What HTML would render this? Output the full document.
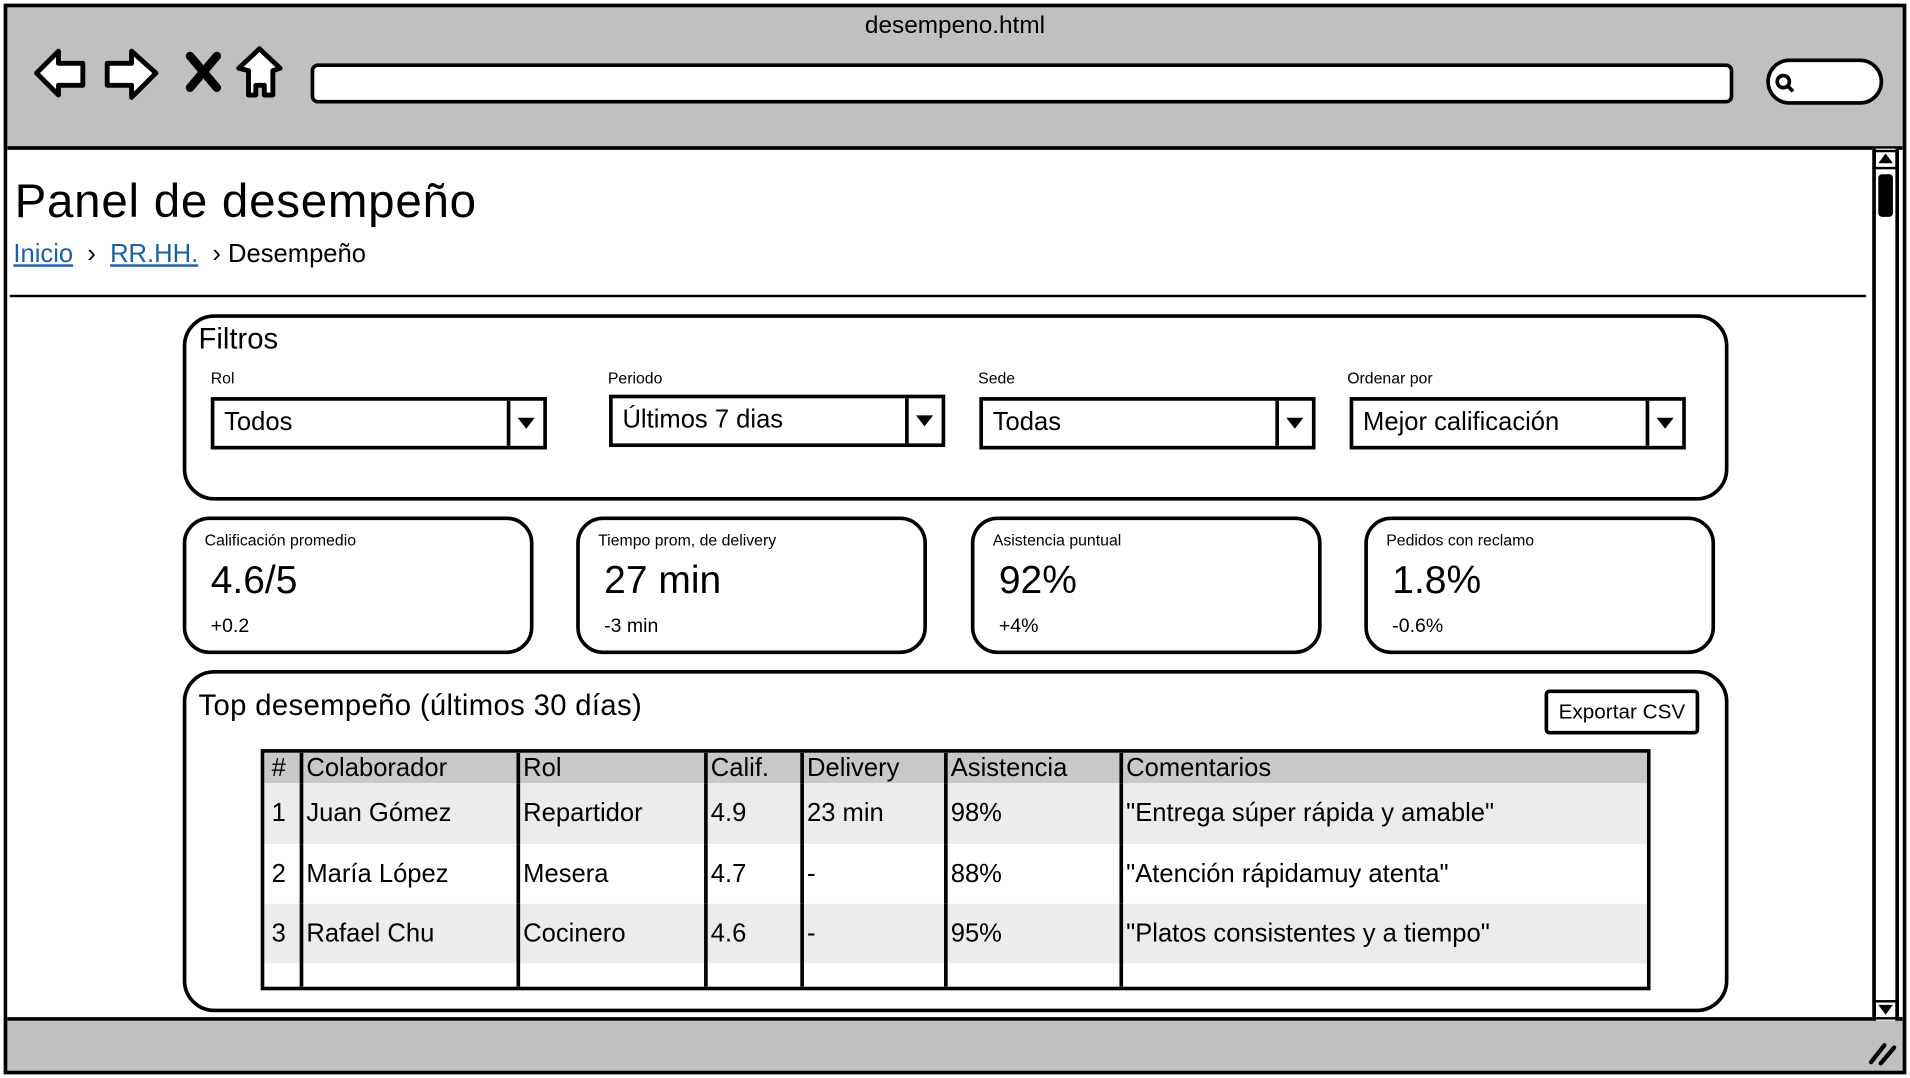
<!DOCTYPE html>
<html><head><meta charset="utf-8"><style>
html,body{margin:0;padding:0;width:1910px;height:1078px;overflow:hidden;background:#fff}
#w{position:absolute;left:0;top:0;width:1568px;height:885px;transform:scale(1.2181,1.2181);transform-origin:0 0;font-family:"Liberation Sans",sans-serif;color:#000}
.a{position:absolute}
.box{position:absolute;border:3px solid #000;box-sizing:border-box;background:#fff}
.t{position:absolute;white-space:nowrap}
.sel{position:absolute;border:3px solid #000;box-sizing:border-box;height:43px;background:#fff}
.sel span{position:absolute;left:8px;top:6px;font-size:21px}
.sel i{position:absolute;right:0;top:0;bottom:0;width:27px;border-left:3px solid #000}
.sel i:after{content:"";position:absolute;left:6px;top:14px;border-left:7px solid transparent;border-right:7px solid transparent;border-top:9px solid #000}
.card{position:absolute;border:3px solid #000;border-radius:22px;box-sizing:border-box;height:113px;width:288px;top:424px}
.card .l{position:absolute;left:15px;top:9px;font-size:13px}
.card .v{position:absolute;left:20px;top:31px;font-size:32px}
.card .d{position:absolute;left:20px;top:79px;font-size:16px}
td{padding:0 0 0 3px;font-size:21px;border-left:3px solid #000;vertical-align:middle;white-space:nowrap}
td:first-child{border-left:none;padding-left:6px}
</style></head><body><div id="w">
<div class="a" style="left:3px;top:3px;width:1562px;height:879px;background:#c0c0c0;border:3px solid #000;box-sizing:border-box"></div>
<div class="a" style="left:6px;top:120px;width:1556px;height:718px;background:#fff;border-top:3px solid #000;border-bottom:3px solid #000;box-sizing:border-box"></div>
<div class="t" style="left:0;width:1568px;text-align:center;top:10px;font-size:20px">desempeno.html</div>
<svg class="a" style="left:20px;top:36px" width="220" height="50" viewBox="0 0 220 50">
<g fill="#fff" stroke="#000" stroke-width="4" stroke-linejoin="round">
<path d="M10 24 L28 6 L28 16 L48 16 L48 34 L28 34 L28 42 Z"/>
<path d="M68 16 L88 16 L88 6 L108 24 L88 44 L88 34 L68 34 Z"/>
<path d="M176 20 L193 4 L210 20 L204 22 L204 42 L197 42 L197 34 L190 34 L190 42 L184 42 L184 22 Z"/>
</g>
<path d="M136 10 L158 36 M158 10 L136 36" stroke="#000" stroke-width="7" stroke-linecap="round"/>
</svg>
<div class="a" style="left:255px;top:52px;width:1168px;height:33px;background:#fff;border:3px solid #000;border-radius:6px;box-sizing:border-box"></div>
<div class="a" style="left:1450px;top:48px;width:96px;height:38px;background:#fff;border:3px solid #000;border-radius:20px;box-sizing:border-box"></div>
<svg class="a" style="left:1455px;top:58px" width="22" height="22"><circle cx="9" cy="9" r="5" fill="none" stroke="#000" stroke-width="3"/><path d="M12 12 L17 17" stroke="#000" stroke-width="3"/></svg>
<div class="a" style="left:1537px;top:122px;width:22px;height:716px;border:3px solid #000;border-top:none;border-bottom:none;box-sizing:border-box;background:#fff"></div>
<div class="a" style="left:1538px;top:123px;width:20px;height:16px;border:2px solid #000;box-sizing:border-box"></div>
<div class="a" style="left:1542px;top:126px;border-left:6px solid transparent;border-right:6px solid transparent;border-bottom:8px solid #000"></div>
<div class="a" style="left:1542px;top:143px;width:12px;height:35px;background:#000;border-radius:3px"></div>
<div class="a" style="left:1538px;top:821px;width:20px;height:16px;border:2px solid #000;box-sizing:border-box"></div>
<div class="a" style="left:1542px;top:825px;border-left:6px solid transparent;border-right:6px solid transparent;border-top:8px solid #000"></div>
<svg class="a" style="left:1533px;top:852px" width="26" height="24"><path d="M3 20 L14 6 M11 21 L22 8" stroke="#000" stroke-width="3.5" stroke-linecap="round"/></svg>
<div class="t" style="left:12px;top:144px;font-size:39px;letter-spacing:0.6px">Panel de desempeño</div>
<div class="t" style="left:11px;top:197px;font-size:21px"><span style="color:#1a5fa8;text-decoration:underline">Inicio</span>&nbsp; › &nbsp;<span style="color:#1a5fa8;text-decoration:underline">RR.HH.</span>&nbsp; › Desempeño</div>
<div class="a" style="left:8px;top:242px;width:1524px;height:2px;background:#000"></div>
<div class="box" style="left:150px;top:258px;width:1269px;height:153px;border-radius:26px"></div>
<div class="t" style="left:163px;top:265px;font-size:24px">Filtros</div>
<div class="t" style="left:173px;top:303px;font-size:13px">Rol</div>
<div class="t" style="left:499px;top:303px;font-size:13px">Periodo</div>
<div class="t" style="left:803px;top:303px;font-size:13px">Sede</div>
<div class="t" style="left:1106px;top:303px;font-size:13px">Ordenar por</div>
<div class="sel" style="left:173px;top:326px;width:276px"><span>Todos</span><i></i></div>
<div class="sel" style="left:500px;top:324px;width:276px"><span>Últimos 7 dias</span><i></i></div>
<div class="sel" style="left:804px;top:326px;width:276px"><span>Todas</span><i></i></div>
<div class="sel" style="left:1108px;top:326px;width:276px"><span>Mejor calificación</span><i></i></div>
<div class="card" style="left:150px"><div class="l">Calificación promedio</div><div class="v">4.6/5</div><div class="d">+0.2</div></div>
<div class="card" style="left:473px"><div class="l">Tiempo prom, de delivery</div><div class="v">27 min</div><div class="d">-3 min</div></div>
<div class="card" style="left:797px"><div class="l">Asistencia puntual</div><div class="v">92%</div><div class="d">+4%</div></div>
<div class="card" style="left:1120px"><div class="l">Pedidos con reclamo</div><div class="v">1.8%</div><div class="d">-0.6%</div></div>
<div class="box" style="left:150px;top:550px;width:1269px;height:281px;border-radius:26px"></div>
<div class="t" style="left:163px;top:566px;font-size:24px;letter-spacing:0.3px">Top desempeño (últimos 30 días)</div>
<div class="box" style="left:1268px;top:566px;width:127px;height:37px;border-radius:4px;font-size:17px;text-align:center;line-height:31px">Exportar CSV</div>
<div class="box" style="left:214px;top:615px;width:1141px;height:198px;overflow:hidden">
<table style="border-collapse:collapse;width:100%;height:100%;table-layout:fixed">
<colgroup><col style="width:30px"><col style="width:178px"><col style="width:154px"><col style="width:79px"><col style="width:118px"><col style="width:144px"><col></colgroup>
<tr style="background:#c8c8c8;height:25px"><td>#</td><td>Colaborador</td><td>Rol</td><td>Calif.</td><td>Delivery</td><td>Asistencia</td><td>Comentarios</td></tr>
<tr style="background:#ececec;height:50px"><td>1</td><td>Juan Gómez</td><td>Repartidor</td><td>4.9</td><td>23 min</td><td>98%</td><td>"Entrega súper rápida y amable"</td></tr>
<tr style="background:#fff;height:49px"><td>2</td><td>María López</td><td>Mesera</td><td>4.7</td><td>-</td><td>88%</td><td>"Atención rápidamuy atenta"</td></tr>
<tr style="background:#ececec;height:49px"><td>3</td><td>Rafael Chu</td><td>Cocinero</td><td>4.6</td><td>-</td><td>95%</td><td>"Platos consistentes y a tiempo"</td></tr>
<tr style="background:#fff"><td></td><td></td><td></td><td></td><td></td><td></td><td></td></tr>
</table></div>
</div></body></html>
